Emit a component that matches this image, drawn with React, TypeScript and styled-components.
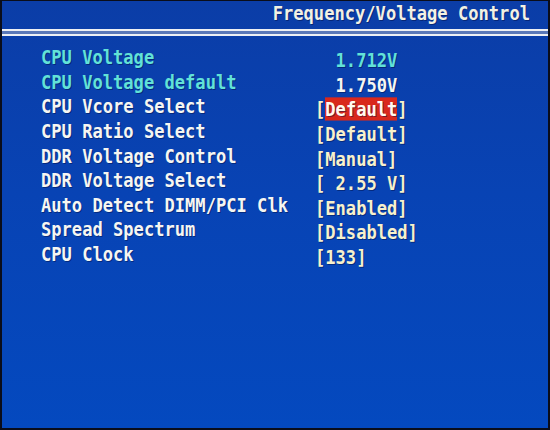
import React from "react";
import styled, { createGlobalStyle } from "styled-components";

const GlobalStyle = createGlobalStyle`
  html, body {
    margin: 0;
    padding: 0;
    background: #000;
  }
`;

const Screen = styled.div`
  box-sizing: border-box;
  width: 550px;
  height: 430px;
  display: flex;
  flex-direction: column;
  border-style: solid;
  border-color: #0a0d1a;
  border-width: 1px 2px 2px 2px;
  background: linear-gradient(180deg, #0b3da7 0%, #0843b4 45%, #0449bf 100%);
  font-family: "DejaVu Sans Mono", "Liberation Mono", monospace;
  font-weight: 700;
  font-size: 17.1px;
  overflow: hidden;
`;

const Header = styled.header`
  height: 28px;
  display: flex;
  justify-content: flex-end;
  align-items: flex-start;
  padding-right: 18px;
`;

const Text = styled.span<{ $tone?: "title" | "cyan" | "white" | "cream" }>`
  display: inline-block;
  white-space: pre;
  line-height: 24.65px;
  transform: scaleY(1.16);
  text-shadow: 1px 1px 0 rgba(0, 10, 60, 0.45);
  color: ${({ $tone }) =>
    $tone === "cyan"
      ? "#62e2d8"
      : $tone === "cream"
      ? "#f7f1cc"
      : $tone === "title"
      ? "#f2f1e4"
      : "#f6f6f2"};
`;

const DoubleRule = styled.div`
  height: 3px;
  border-top: 2px solid #eef0f4;
  border-bottom: 2px solid #eef0f4;
  background: #5a78b8;
`;

const List = styled.div`
  display: grid;
  grid-auto-rows: 24.65px;
  padding: 9px 0 0 39px;
`;

const Row = styled.div`
  display: grid;
  grid-template-columns: 274px auto;
`;

const Value = styled.div`
  padding-top: 3px;
`;

const Highlight = styled.span`
  background: #d9281c;
  color: #fffaf0;
`;

type Item = {
  label: string;
  value: React.ReactNode;
  labelTone: "cyan" | "white";
  valueTone: "cyan" | "white" | "cream";
};

const items: Item[] = [
  { label: "CPU Voltage", value: "  1.712V", labelTone: "cyan", valueTone: "cyan" },
  { label: "CPU Voltage default", value: "  1.750V", labelTone: "cyan", valueTone: "white" },
  {
    label: "CPU Vcore Select",
    value: (
      <>
        [<Highlight>Default</Highlight>]
      </>
    ),
    labelTone: "white",
    valueTone: "cream",
  },
  { label: "CPU Ratio Select", value: "[Default]", labelTone: "white", valueTone: "cream" },
  { label: "DDR Voltage Control", value: "[Manual]", labelTone: "white", valueTone: "cream" },
  { label: "DDR Voltage Select", value: "[ 2.55 V]", labelTone: "white", valueTone: "cream" },
  { label: "Auto Detect DIMM/PCI Clk", value: "[Enabled]", labelTone: "white", valueTone: "cream" },
  { label: "Spread Spectrum", value: "[Disabled]", labelTone: "white", valueTone: "cream" },
  { label: "CPU Clock", value: "[133]", labelTone: "white", valueTone: "cream" },
];

export default function App() {
  return (
    <>
      <GlobalStyle />
      <Screen>
        <Header>
          <Text $tone="title">Frequency/Voltage Control</Text>
        </Header>
        <DoubleRule />
        <List>
          {items.map((item) => (
            <Row key={item.label}>
              <div>
                <Text $tone={item.labelTone}>{item.label}</Text>
              </div>
              <Value>
                <Text $tone={item.valueTone}>{item.value}</Text>
              </Value>
            </Row>
          ))}
        </List>
      </Screen>
    </>
  );
}
